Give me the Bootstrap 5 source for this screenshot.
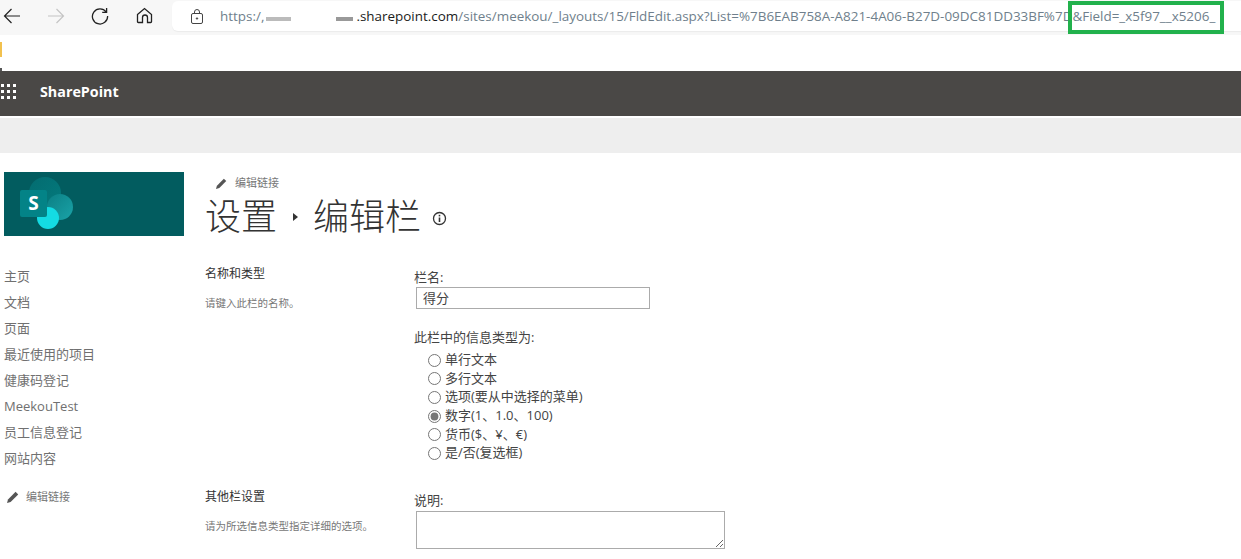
<!DOCTYPE html>
<html lang="zh-CN">
<head>
  <meta charset="UTF-8">
  <title>设置 - 编辑栏</title>
  <link href="https://cdn.jsdelivr.net/npm/bootstrap@5.3.0/dist/css/bootstrap.min.css" rel="stylesheet">
  <style>
    html, body { height: 559px; overflow: hidden; }
    body {
      position: relative;
      background: #fff;
      color: #444;
      font-family: "Open Sans", "Noto Sans CJK SC", sans-serif;
      font-size: 13px;
      line-height: 18px;
    }
    .browser-bar { height: 35px; background: #f7f7f7; padding-bottom: 4px; }
    .browser-btn { width: 44px; height: 31px; flex: none; }
    .browser-btns { margin-left: -10px; width: 182px; flex: none; }
    .url-box {
      flex: 1;
      height: 30px;
      margin-top: 1px;
      background: #fff;
      border-radius: 6px 0 0 6px;
      box-shadow: 0 1px 1px rgba(0,0,0,.05);
      padding-left: 19px;
      font-size: 13.44px;
      color: #6f7f8c;
      white-space: nowrap;
      overflow: hidden;
    }
    .url-box > svg { margin-right: 17px; flex: none; }
    .url-dark { color: #1b1b1b; }
    .url-gap { display: inline-block; width: 92px; height: 6px; vertical-align: baseline; }
    .url-gap svg { display: block; }
    .url-mark {
      position: absolute;
      left: 1068px;
      top: 1px;
      width: 156px;
      height: 33px;
      border: 4px solid #22b14c;
    }
    .notice-strip { height: 36px; position: relative; }
    .notice-flag { position: absolute; left: 0; top: 7px; width: 2px; height: 15px; background: #f2c14e; }
    .notice-end { position: absolute; left: 0; top: 33px; width: 2px; height: 3px; background: #555; }
    .suite-bar { height: 45px; background: #4a4846; color: #fff; padding-bottom: 3px; }
    .waffle { width: 40px; flex: none; padding-left: 1px; }
    .suite-name { font-size: 14.3px; font-weight: 700; }
    .ribbon-band { height: 35px; background: #eeeeee; margin-top: 2px; }
    .page-area { display: flex; padding: 19px 0 0 4px; }
    .side-col { width: 180px; flex: none; margin-right: 21px; }
    .site-logo { display: block; width: 180px; height: 64px; background: #025c5f; }
    .side-links { margin-top: 27px; }
    .side-links a { display: block; height: 26px; line-height: 26px; color: #707070; text-decoration: none; }
    .edit-links { color: #777; font-size: 11px; line-height: 14px; }
    .side-edit { margin: 19px 0 0 3px; }
    .side-edit svg { margin-right: 7px; }
    .main-col { flex: 1; }
    .top-edit { margin: 4px 0 0 11px; }
    .top-edit svg { margin-right: 8px; }
    .page-heading { height: 45px; margin-top: 2px; font-size: 36px; font-weight: 300; line-height: 45px; color: #333; font-family: "Noto Sans CJK SC", sans-serif; }
    .crumb-arrow { width: 0; height: 0; border-left: 5px solid #333; border-top: 4px solid transparent; border-bottom: 4px solid transparent; margin: 5px 15px 0 16px; }
    .info-dot { margin: 8px 0 0 11px; }
    .form-block { display: flex; }
    .block-left { width: 210px; flex: none; }
    .block-title { font-size: 12px; color: #333; line-height: 16px; }
    .block-help { font-size: 10.5px; color: #777; line-height: 14px; margin-top: 14px; }
    .block-right { flex: 1; padding-top: 3px; }
    .name-block { margin-top: 29px; }
    .field-cap { color: #444; font-size: 13px; line-height: 16px; margin-left: -1px; }
    .name-input {
      display: block;
      width: 234px;
      height: 22px;
      margin: 2px 0 0 1px;
      border: 1px solid #ababab;
      padding: 0 6px 2px;
      font-size: 13px;
      color: #444;
      outline: 0;
    }
    .type-cap { margin-top: 20px; }
    .type-list { margin: 5px 0 0 13px; }
    .type-row { display: flex; align-items: center; height: 18.6px; font-size: 13px; color: #444; }
    .type-row input { width: 13px; height: 13px; margin: 2px 4px 0 0; accent-color: #767676; }
    .other-block { margin-top: 27px; }
    .desc-box {
      display: block;
      width: 309px;
      height: 38px;
      margin: 3px 0 0 1px;
      border: 1px solid #ababab;
      outline: 0;
    }
  </style>
</head>
<body>
  <div class="browser-bar d-flex">
    <div class="browser-btns d-flex">
      <div class="browser-btn d-flex align-items-center justify-content-center">
        <svg width="18" height="18" viewBox="0 0 18 18" fill="none" stroke="#222" stroke-width="1.2"><path d="M17 9H1.5M8.5 2 1.5 9l7 7"/></svg>
      </div>
      <div class="browser-btn d-flex align-items-center justify-content-center">
        <svg width="18" height="18" viewBox="0 0 18 18" fill="none" stroke="#c4c4c4" stroke-width="1.2"><path d="M1 9h15.5M9.5 2l7 7-7 7"/></svg>
      </div>
      <div class="browser-btn d-flex align-items-center justify-content-center">
        <svg width="18" height="18" viewBox="0 0 18 18" fill="none" stroke="#222" stroke-width="1.3"><path d="M15.2 5A7.6 7.6 0 1 0 16.6 9"/><path d="M15.6 1v4.4h-4.4"/></svg>
      </div>
      <div class="browser-btn d-flex align-items-center justify-content-center">
        <svg width="17" height="17" viewBox="0 0 17 17" fill="none" stroke="#222" stroke-width="1.3"><path d="M1.5 7.5 8.5 1.5l7 6v7.2a.8.8 0 0 1-.8.8h-3.2v-5a2.5 2.5 0 0 0-5 0v5H2.3a.8.8 0 0 1-.8-.8z"/></svg>
      </div>
    </div>
    <div class="url-box d-flex align-items-center">
      <svg width="12" height="15" viewBox="0 0 12 15" fill="none" stroke="#444" stroke-width="1"><rect x=".5" y="4.5" width="11" height="10" rx="1.5"/><path d="M3.5 4.5V3a2.5 2.5 0 0 1 5 0v1.5"/><circle cx="6" cy="9.5" r=".7" fill="#444"/></svg>
      <span>https:/,<span class="url-gap"><svg width="92" height="6" viewBox="0 0 92 6" fill="#555"><rect x="2" y="2" width="25" height="4" opacity=".4"/><rect x="72" y="2" width="17" height="4" opacity=".6"/></svg></span><span class="url-dark">.sharepoint.com</span>/sites/meekou/_layouts/15/FldEdit.aspx?List=%7B6EAB758A-A821-4A06-B27D-09DC81DD33BF%7D&amp;Field=_x5f97__x5206_</span>
    </div>
  </div>
  <div class="url-mark"></div>

  <div class="notice-strip"><div class="notice-flag"></div><div class="notice-end"></div></div>

  <div class="suite-bar d-flex align-items-center">
    <div class="waffle d-flex">
      <svg width="16" height="16" viewBox="0 0 16 16" fill="#fff">
        <rect x="0" y="0" width="3" height="3"/><rect x="6" y="0" width="3" height="3"/><rect x="12" y="0" width="3" height="3"/>
        <rect x="0" y="6" width="3" height="3"/><rect x="6" y="6" width="3" height="3"/><rect x="12" y="6" width="3" height="3"/>
        <rect x="0" y="12" width="3" height="3"/><rect x="6" y="12" width="3" height="3"/><rect x="12" y="12" width="3" height="3"/>
      </svg>
    </div>
    <span class="suite-name">SharePoint</span>
  </div>
  <div class="ribbon-band"></div>

  <div class="page-area">
    <div class="side-col">
      <svg class="site-logo" viewBox="0 0 180 64">
        <defs>
          <linearGradient id="logoTop" x1="0" y1="0" x2="1" y2="1"><stop offset="0" stop-color="#036c70"/><stop offset="1" stop-color="#047a7d"/></linearGradient>
          <linearGradient id="logoMid" x1="0" y1="0" x2="1" y2="1"><stop offset="0" stop-color="#0b7f84"/><stop offset="1" stop-color="#1aa3a8"/></linearGradient>
        </defs>
        <circle cx="41" cy="21" r="16" fill="url(#logoTop)"/>
        <circle cx="56" cy="35" r="13" fill="url(#logoMid)"/>
        <circle cx="44" cy="46" r="11" fill="#14dbe3"/>
        <rect x="16" y="18" width="27" height="27" rx="2" fill="#038387"/>
        <text x="29.5" y="38" text-anchor="middle" font-family="Open Sans, sans-serif" font-size="19" font-weight="700" fill="#fff">S</text>
      </svg>
      <div class="side-links">
        <a href="#">主页</a>
        <a href="#">文档</a>
        <a href="#">页面</a>
        <a href="#">最近使用的项目</a>
        <a href="#">健康码登记</a>
        <a href="#">MeekouTest</a>
        <a href="#">员工信息登记</a>
        <a href="#">网站内容</a>
      </div>
      <div class="edit-links side-edit d-flex align-items-center">
        <svg width="12" height="12" viewBox="0 0 12 12" fill="#555"><path d="M0 12l1-3.6L8.6.8l2.6 2.6L3.6 11z"/></svg>
        <span>编辑链接</span>
      </div>
    </div>

    <div class="main-col">
      <div class="edit-links top-edit d-flex align-items-center">
        <svg width="11" height="11" viewBox="0 0 12 12" fill="#555"><path d="M0 12l1-3.6L8.6.8l2.6 2.6L3.6 11z"/></svg>
        <span>编辑链接</span>
      </div>
      <div class="page-heading d-flex align-items-center">
        <span>设置</span>
        <span class="crumb-arrow"></span>
        <span>编辑栏</span>
        <svg class="info-dot" width="15" height="15" viewBox="0 0 15 15" fill="none" stroke="#333" stroke-width="1.3"><circle cx="7.5" cy="7.5" r="6"/><path d="M7.5 6.5v4.5" stroke-width="1.6"/><path d="M7.5 3.8v1.6" stroke-width="1.6"/></svg>
      </div>

      <div class="form-block name-block">
        <div class="block-left">
          <div class="block-title">名称和类型</div>
          <div class="block-help">请键入此栏的名称。</div>
        </div>
        <div class="block-right">
          <div class="field-cap">栏名:</div>
          <input class="name-input" type="text" value="得分">
          <div class="field-cap type-cap">此栏中的信息类型为:</div>
          <div class="type-list">
            <label class="type-row"><input type="radio" name="fieldType">单行文本</label>
            <label class="type-row"><input type="radio" name="fieldType">多行文本</label>
            <label class="type-row"><input type="radio" name="fieldType">选项(要从中选择的菜单)</label>
            <label class="type-row"><input type="radio" name="fieldType" checked>数字(1、1.0、100)</label>
            <label class="type-row"><input type="radio" name="fieldType">货币($、¥、€)</label>
            <label class="type-row"><input type="radio" name="fieldType">是/否(复选框)</label>
          </div>
        </div>
      </div>

      <div class="form-block other-block">
        <div class="block-left">
          <div class="block-title">其他栏设置</div>
          <div class="block-help">请为所选信息类型指定详细的选项。</div>
        </div>
        <div class="block-right">
          <div class="field-cap">说明:</div>
          <textarea class="desc-box"></textarea>
        </div>
      </div>
    </div>
  </div>

  <script src="https://cdn.jsdelivr.net/npm/bootstrap@5.3.0/dist/js/bootstrap.bundle.min.js"></script>
</body>
</html>
